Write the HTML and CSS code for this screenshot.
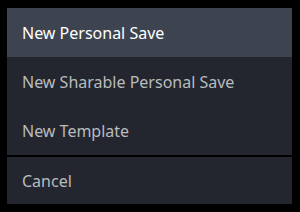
FILE: index.html
```html
<!DOCTYPE html>
<html lang="en">
<head>
	<meta charset="utf-8">
	<title>Save menu</title>
	<link rel="stylesheet" href="styles.css">
</head>
<body>
	<div class="menu">
		<div class="item active">New Personal Save</div>
		<div class="item">New Sharable Personal Save</div>
		<div class="item">New Template</div>
		<div class="sep"></div>
		<div class="item last">Cancel</div>
	</div>
</body>
</html>
```

FILE: styles.css
```css
body {
	margin: 0;
	background: #000;
	padding: 8px 8px 0 7px;
	font-family: "Noto Sans", "Open Sans", sans-serif;
}

.menu {
	width: 285px;
	background: #23262e;
	box-shadow: 0 0 10px rgba(0,0,0,.6);
	display: flex;
	flex-direction: column;
}

.item {
	height: 49px;
	display: flex;
	align-items: center;
	padding-left: 15px;
	font-size: 16px;
	color: #b8bcbf;
}

.item.last {
	height: 47px;
}

.item.active {
	background: #3d4450;
	color: #fff;
}

.sep {
	height: 2px;
	background: #000;
}
```
